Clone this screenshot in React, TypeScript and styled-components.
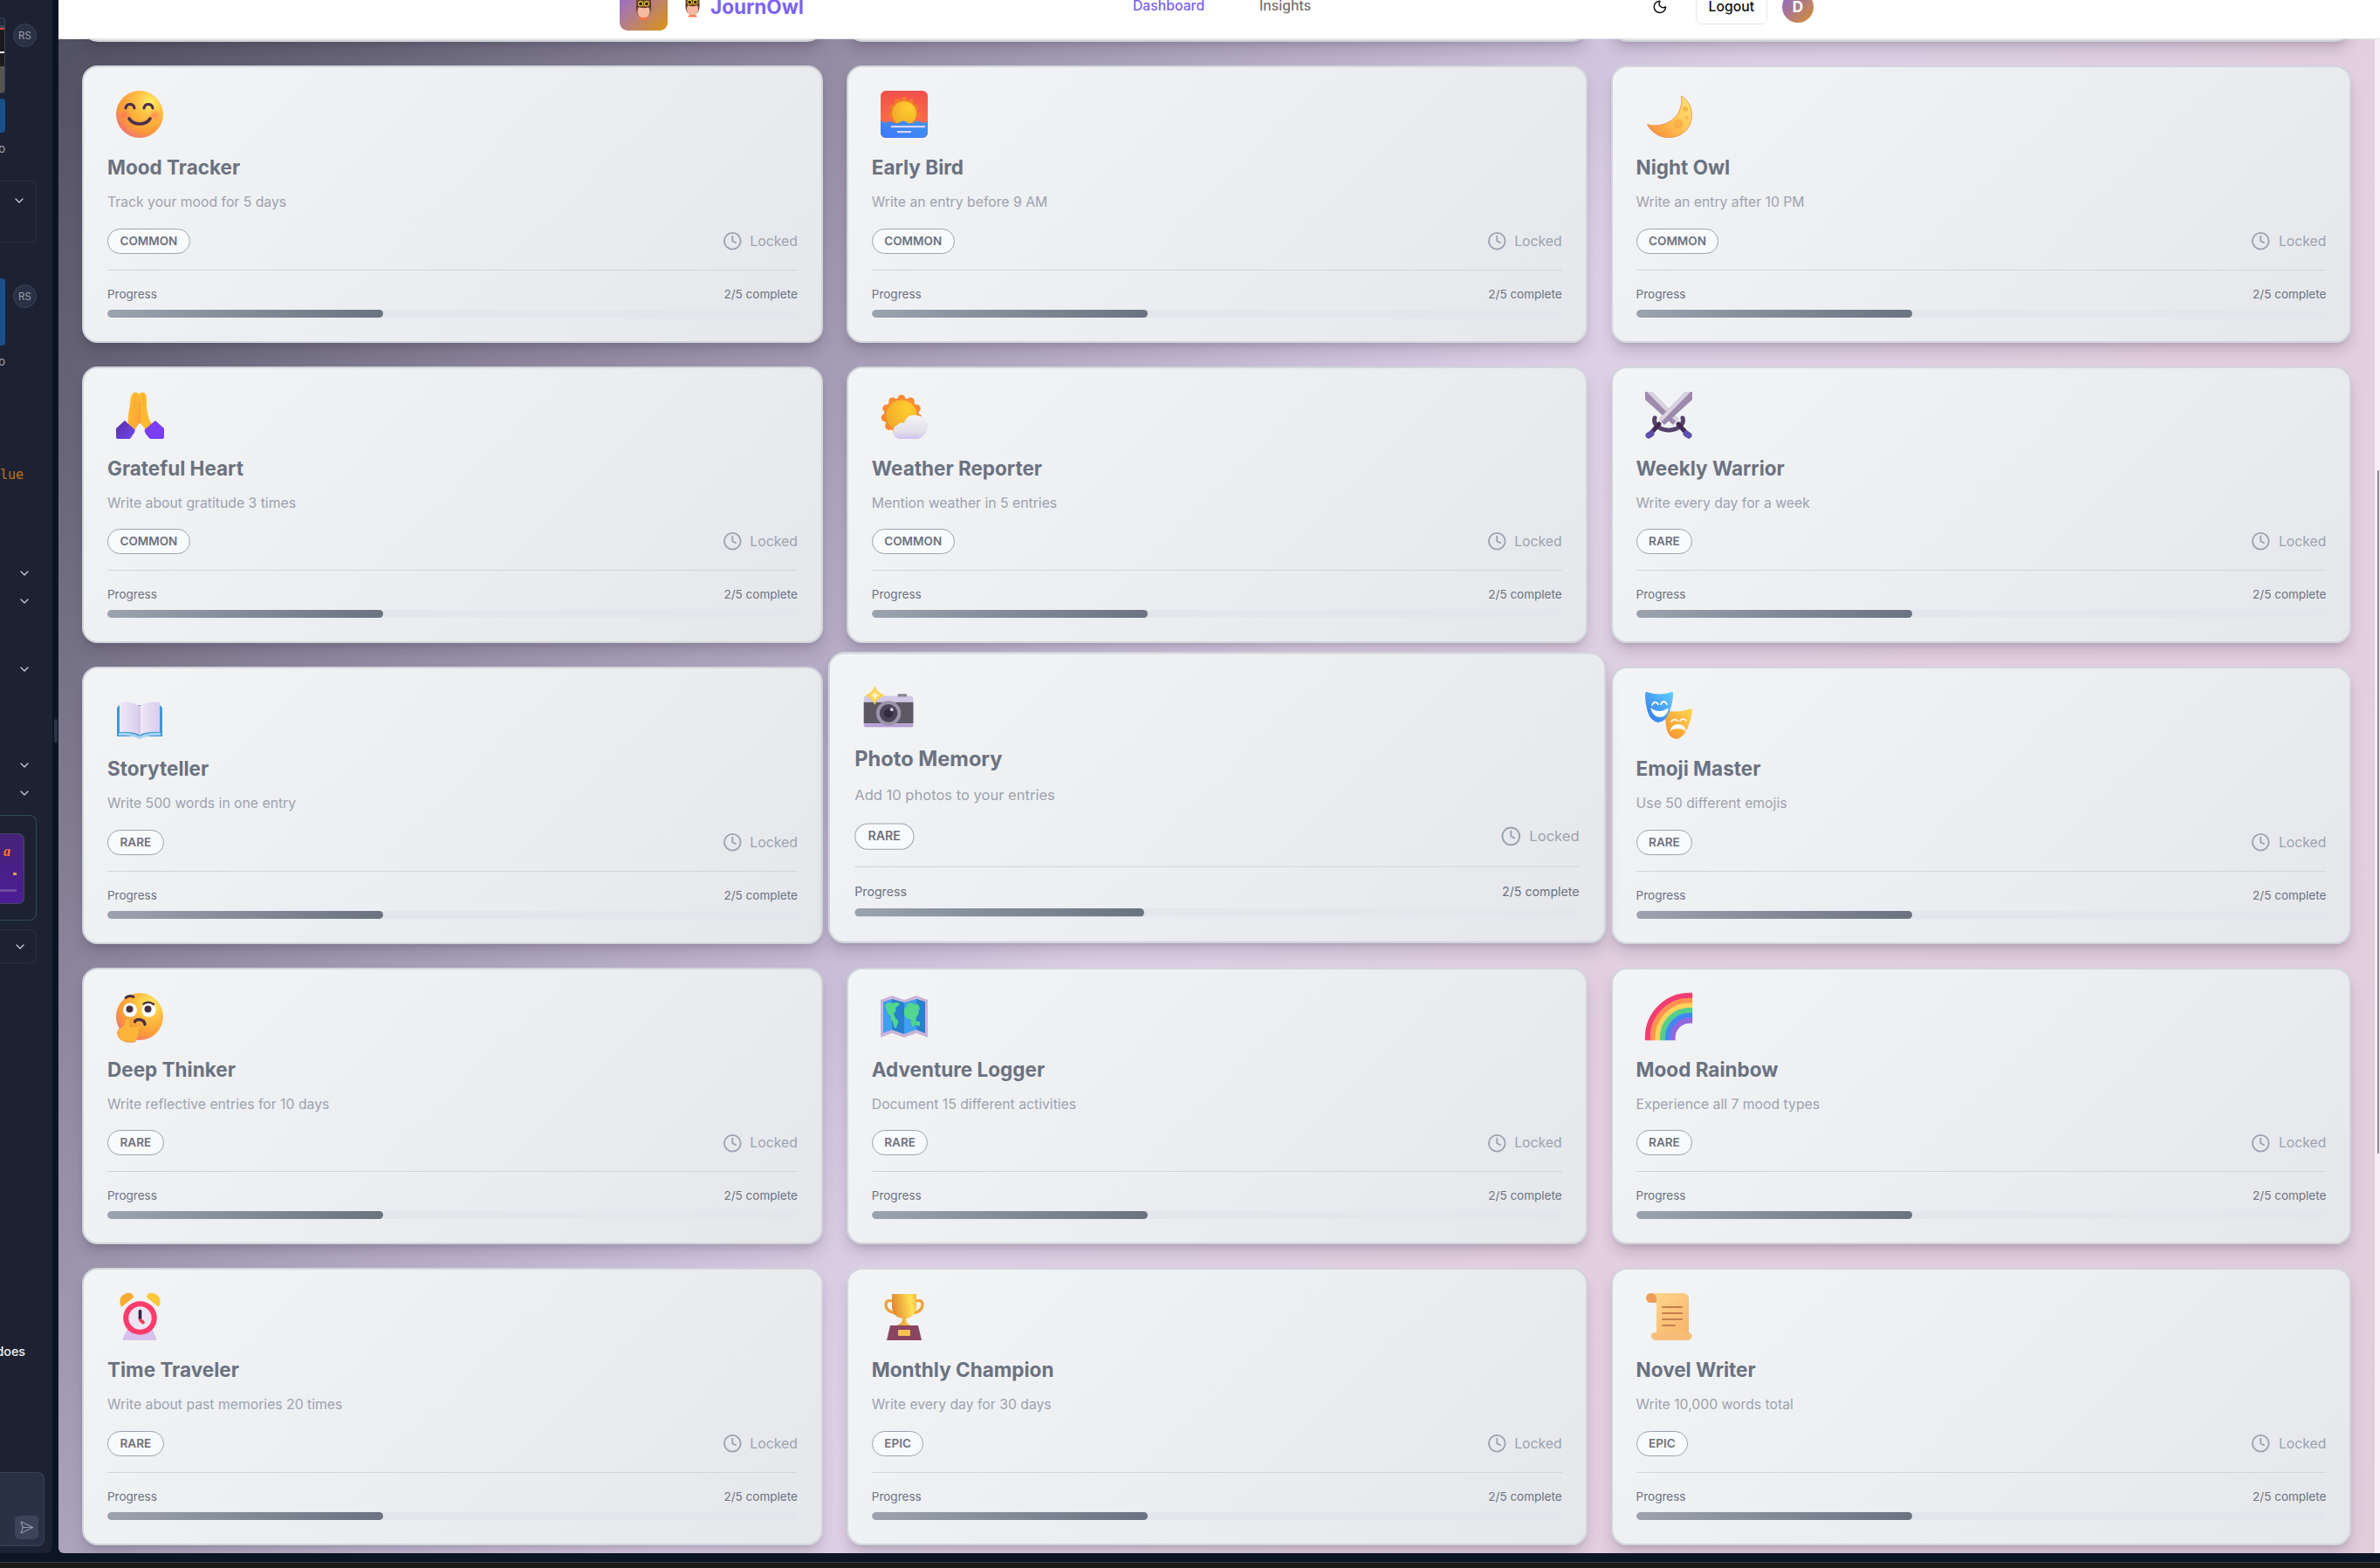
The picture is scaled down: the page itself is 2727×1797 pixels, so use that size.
import React from "react";
import styled, { createGlobalStyle } from "styled-components";
import { ChevronDown, Clock, Moon, SendHorizontal } from "lucide-react";

const GlobalStyle = createGlobalStyle`
  * { box-sizing: border-box; }
  body { margin: 0; background: #0c1524; font-family: Inter, "Liberation Sans", sans-serif; }
`;

const Screen = styled.div`
  width: 2727px;
  height: 1797px;
  display: grid;
  grid-template-rows: 1790px 7px;
  overflow: hidden;
`;

const Workspace = styled.div`
  display: flex;
  background: #0c1524;
`;

const Taskbar = styled.div`
  background: #1b1b1b;
  border-top: 1px solid #3a3d42;
`;

/* ---------- chat sidebar ---------- */

const Sidebar = styled.aside`
  width: 60px;
  height: 1780px;
  background: #1c2232;
  border-bottom-right-radius: 8px;
  overflow: hidden;
  flex: none;
`;

const Splitter = styled.div`
  width: 7px;
  flex: none;
  display: flex;
  justify-content: center;
  padding-top: 824px;
`;

const Grip = styled.div`
  width: 4px;
  height: 27px;
  border-radius: 2px;
  background: #2b3245;
`;

const Slot = styled.div<{ $h: number; $gap?: number; $right?: number }>`
  height: ${(p) => p.$h}px;
  margin-top: ${(p) => p.$gap ?? 0}px;
  padding-right: ${(p) => p.$right ?? 18}px;
  display: flex;
  justify-content: flex-end;
  align-items: center;
  overflow: hidden;
`;

const MessageRow = styled(Slot)`
  gap: 9px;
  justify-content: flex-start;
  align-items: flex-start;
`;

const Thumb = styled.div`
  width: 6px;
  height: 87px;
  border: 1px solid #3b4256;
  border-left: 0;
  border-radius: 0 4px 4px 0;
  flex: none;
  background: linear-gradient(#20283c 0 8px, #3d4250 8px 11px, #d94a4a 11px 13px, #1a1a1c 13px 38px, #f4f4f4 38px 40px, #1c1c1c 40px 55px, #55554f 55px);
`;

const BlueBubble = styled.div`
  width: 6px;
  height: 100%;
  border-radius: 0 4px 4px 0;
  background: #1a4f8a;
  flex: none;
`;

const Avatar = styled.div`
  width: 27px;
  height: 27px;
  margin-top: 7px;
  border-radius: 50%;
  border: 1px solid #3b4358;
  background: #2a3144;
  color: #9aa1ae;
  font-size: 11.5px;
  display: flex;
  align-items: center;
  justify-content: center;
  flex: none;
`;

const Stamp = styled.span`
  font-size: 13px;
  color: #a3a8b3;
`;

const CodeText = styled.span`
  font: 15px "DejaVu Sans Mono", monospace;
  color: #c0731b;
`;

const ChatText = styled.span`
  font-size: 14.3px;
  font-weight: 500;
  color: #f0f2f5;
`;

const Panel = styled.div<{ $h: number; $gap: number; $line?: string; $pad?: number; $right?: number }>`
  height: ${(p) => p.$h}px;
  width: 42px;
  margin-top: ${(p) => p.$gap}px;
  border: 1px solid ${(p) => p.$line ?? "#2b3142"};
  border-left: 0;
  border-radius: 0 8px 8px 0;
  padding: ${(p) => p.$pad ?? 0}px ${(p) => p.$right ?? 13}px 0 0;
  display: flex;
  justify-content: flex-end;
`;

const PurpleCard = styled.div`
  width: 28px;
  height: 81px;
  margin-top: 20px;
  border: 1px solid #4b4468;
  border-left: 0;
  border-radius: 0 7px 7px 0;
  background: linear-gradient(#452278, #4c1d95);
  display: flex;
  flex-direction: column;
  align-items: flex-end;
  padding: 8px 8px 0 0;
`;

const Script = styled.span`
  font: italic bold 16px/24px "Liberation Serif", serif;
  color: #f97a24;
  margin-right: 7px;
`;

const TinyLine = styled.div<{ $w: number; $c: string; $gap: number }>`
  width: ${(p) => p.$w}px;
  height: 3px;
  margin-top: ${(p) => p.$gap}px;
  background: ${(p) => p.$c};
`;

const Composer = styled.div`
  width: 51px;
  height: 85px;
  border: 1px solid #3a4258;
  border-left: 0;
  border-radius: 0 8px 8px 0;
  background: #2b3145;
  display: flex;
  justify-content: flex-end;
  align-items: flex-end;
  padding: 0 6px 7px 0;
`;

const SendButton = styled.div`
  width: 27px;
  height: 27px;
  border-radius: 5px;
  background: #3c435b;
  color: #9197a6;
  display: flex;
  align-items: center;
  justify-content: center;
`;

/* ---------- preview page ---------- */

const Preview = styled.main`
  width: 2660px;
  height: 1780px;
  overflow: hidden;
  border-radius: 0 0 0 6px;
  display: flex;
  flex-direction: column;
`;

const Header = styled.header`
  height: 45px;
  flex: none;
  background: #fff;
  border-bottom: 1px solid #e3e3e6;
  display: flex;
  align-items: flex-start;
  padding-left: 643px;
  position: relative;
  z-index: 2;
`;

const LogoBox = styled.div`
  width: 55px;
  height: 55px;
  margin-top: -20px;
  border-radius: 9px;
  background: linear-gradient(135deg, #8460e6, #a978a6 35%, #dc9410);
  display: flex;
  align-items: center;
  justify-content: center;
`;

const Brand = styled.div`
  display: flex;
  align-items: flex-start;
  gap: 11px;
  margin-left: 19px;
  width: 514px;
`;

const BrandOwl = styled.div`
  margin-top: -9px;
  height: 28px;
`;

const BrandName = styled.span`
  font-weight: 700;
  font-size: 22.5px;
  line-height: 32px;
  margin-top: -8px;
  color: #7c63f2;
`;

const NavLink = styled.span<{ $active?: boolean; $w: number }>`
  width: ${(p) => p.$w}px;
  font-size: 15.75px;
  font-weight: 500;
  line-height: 22px;
  margin-top: -4px;
  color: ${(p) => (p.$active ? "#7b61ee" : "#78716c")};
`;

const MoonIcon = styled(Moon)`
  margin: -1px 32px 0 0;
  color: #111;
`;

const LogoutButton = styled.div`
  width: 82px;
  height: 40px;
  margin-top: -12.5px;
  border: 1px solid #e5e5e8;
  border-radius: 7px;
  display: flex;
  align-items: center;
  justify-content: center;
  font-size: 15.75px;
  font-weight: 500;
  color: #111;
`;

const UserBadge = styled.div`
  width: 36px;
  height: 36px;
  margin: -10px 0 0 17px;
  border-radius: 50%;
  background: linear-gradient(135deg, #8765dd, #d8902a);
  display: flex;
  align-items: center;
  justify-content: center;
  font-size: 17px;
  font-weight: 700;
  color: #fff;
`;

const Body = styled.div`
  flex: 1;
  display: flex;
  min-height: 0;
`;

const Canvas = styled.section`
  width: 2654px;
  padding-left: 27px;
  overflow: hidden;
  background: linear-gradient(126deg, #525162, #6c697c 10.3%, #8a8399 19.6%, #a8a0b8 31%, #cbc0d9 43.5%, #dccfe5 50%, #e2cfe0 68%, #e0cddc);
`;

const Scrollbar = styled.div`
  width: 6px;
  background: #f6eef5;
  padding: 494px 1px 0 3px;
`;

const ScrollThumb = styled.div`
  height: 783px;
  border-radius: 2px;
  background: #8a8a8a;
`;

const Grid = styled.div`
  display: grid;
  grid-template-columns: repeat(3, 848.8px);
  gap: 27px;
`;

const cardShadow = "0 11px 17px -3px rgba(30, 20, 40, 0.17), 0 4px 7px -4px rgba(30, 20, 40, 0.17)";

const CardEdge = styled.div`
  height: 43px;
  margin-top: -40px;
  border: 2px solid #cdd1d7;
  border-radius: 18px;
  background: #e7e9ec;
  box-shadow: ${cardShadow};
`;

const Card = styled.article<{ $hover?: boolean }>`
  height: 317.6px;
  padding: 27px;
  border: 2.25px solid #d1d5db;
  border-radius: 18px;
  background: linear-gradient(135deg, #f3f4f6, #e5e7eb);
  box-shadow: ${cardShadow};
  ${(p) => p.$hover && "transform: translateY(-9px) scale(1.05); z-index: 1;"}
`;

const EmojiBox = styled.div`
  height: 72px;
  padding-left: 10px;
  svg { display: block; overflow: visible; }
`;

const Title = styled.h3`
  margin: 0 0 13.5px;
  font-size: 22.5px;
  line-height: 31.5px;
  font-weight: 700;
  color: #6b7280;
`;

const Description = styled.p`
  margin: 0 0 18px;
  font-size: 15.75px;
  line-height: 22.5px;
  color: #9ca3af;
`;

const MetaRow = styled.div`
  display: flex;
  justify-content: space-between;
  align-items: center;
  height: 29px;
`;

const Badge = styled.span`
  height: 29px;
  padding: 0 13.5px;
  border: 1px solid #9ca3af;
  border-radius: 99px;
  background: #f9fafb;
  font-size: 13.5px;
  font-weight: 600;
  line-height: 27px;
  color: #6b7280;
`;

const Locked = styled.span`
  display: flex;
  align-items: center;
  gap: 9px;
  font-size: 15.75px;
  color: #9ca3af;
`;

const ProgressBlock = styled.div`
  margin-top: 18px;
  padding-top: 18px;
  border-top: 1px solid #d1d5db;
`;

const ProgressLabels = styled.div`
  display: flex;
  justify-content: space-between;
  font-size: 13.5px;
  line-height: 18px;
  color: #6b7280;
  margin-bottom: 9px;
`;

const Track = styled.div`
  height: 9px;
  border-radius: 5px;
  background: #e3e7ec;
  overflow: hidden;
`;

const Fill = styled.div`
  width: 40%;
  height: 100%;
  border-radius: 5px;
  background: linear-gradient(90deg, #9ca3af, #6b7280);
`;

/* ---------- emoji drawings ---------- */

const Defs = () => (
  <svg width="0" height="0" style={{ display: "block" }}>
    <defs>
      <radialGradient id="face" cx="0.72" cy="0.25" r="0.85">
        <stop offset="0" stopColor="#fff06a" />
        <stop offset="0.35" stopColor="#ffc043" />
        <stop offset="0.75" stopColor="#fb9a38" />
        <stop offset="1" stopColor="#f0707a" />
      </radialGradient>
      <radialGradient id="blush">
        <stop offset="0" stopColor="#ff6a60" stopOpacity="0.65" />
        <stop offset="1" stopColor="#ff6a60" stopOpacity="0" />
      </radialGradient>
      <linearGradient id="sky" x1="0" y1="0" x2="0" y2="1">
        <stop offset="0" stopColor="#f2504a" />
        <stop offset="1" stopColor="#ff7a4a" />
      </linearGradient>
      <linearGradient id="water" x1="1" y1="0" x2="0" y2="1">
        <stop offset="0" stopColor="#3f96e8" />
        <stop offset="1" stopColor="#3f76ff" />
      </linearGradient>
      <radialGradient id="sun" cx="0.7" cy="0.3" r="0.8">
        <stop offset="0" stopColor="#ffcf30" />
        <stop offset="1" stopColor="#f0a928" />
      </radialGradient>
      <linearGradient id="moon" x1="1" y1="0" x2="0.1" y2="1">
        <stop offset="0" stopColor="#ffe57a" />
        <stop offset="0.5" stopColor="#ffc857" />
        <stop offset="1" stopColor="#f78a3c" />
      </linearGradient>
      <linearGradient id="hand" x1="0" y1="0" x2="1" y2="1">
        <stop offset="0" stopColor="#ffc531" />
        <stop offset="1" stopColor="#fb9d38" />
      </linearGradient>
      <linearGradient id="sleeve" x1="0" y1="0" x2="1" y2="1">
        <stop offset="0" stopColor="#5a2f9c" />
        <stop offset="1" stopColor="#6f49f5" />
      </linearGradient>
      <linearGradient id="cloud" x1="0" y1="0" x2="0" y2="1">
        <stop offset="0" stopColor="#f3f3f5" />
        <stop offset="0.7" stopColor="#e2dfe8" />
        <stop offset="1" stopColor="#cfc0f0" />
      </linearGradient>
      <linearGradient id="maskBlue" x1="1" y1="0" x2="0" y2="1">
        <stop offset="0" stopColor="#62d0ff" />
        <stop offset="1" stopColor="#3273ea" />
      </linearGradient>
      <linearGradient id="maskGold" x1="1" y1="0" x2="0" y2="1">
        <stop offset="0" stopColor="#ffd94f" />
        <stop offset="1" stopColor="#f78c2e" />
      </linearGradient>
      <linearGradient id="cup" x1="0" y1="0.2" x2="1" y2="0">
        <stop offset="0" stopColor="#e28a32" />
        <stop offset="0.75" stopColor="#ffe356" />
        <stop offset="1" stopColor="#f5b540" />
      </linearGradient>
      <linearGradient id="page" x1="0" y1="0" x2="1" y2="0">
        <stop offset="0" stopColor="#efe9f8" />
        <stop offset="1" stopColor="#d8cdec" />
      </linearGradient>
      <linearGradient id="paper" x1="0" y1="0" x2="1" y2="1">
        <stop offset="0" stopColor="#ffd98f" />
        <stop offset="1" stopColor="#f7b56a" />
      </linearGradient>
    </defs>
  </svg>
);

const scallops = (cx: number, cy: number, r: number, dot: number, n = 11) =>
  Array.from({ length: n }, (_, i) => {
    const a = (i / n) * Math.PI * 2 - Math.PI / 2;
    return <circle key={i} cx={cx + r * Math.cos(a)} cy={cy + r * Math.sin(a)} r={dot} />;
  });

const line = (stroke: string, w: number) => ({ fill: "none", stroke, strokeWidth: w, strokeLinecap: "round" as const });

const SwordShape = () => (
  <g>
    <path d="M0 0h8L38 31l-6 7L0 9z" fill="#9d8bae" />
    <path d="M2 0h6L38 31l-3 3z" fill="#d8d3df" />
    <path d="M43 30c2 7-4 13-15 14" {...line("#56426f", 5)} />
    <path d="M38 37l8 9" {...line("#432a55", 5)} />
    <path d="M47 48l3 2" {...line("#5d4fae", 7)} />
  </g>
);

const drawings: Record<string, React.ReactNode> = {
  smile: (
    <>
      <circle cx="27" cy="27" r="27" fill="url(#face)" />
      <circle cx="10" cy="28" r="7" fill="url(#blush)" />
      <circle cx="44" cy="28" r="7" fill="url(#blush)" />
      <path d="M11 20c1-6 9-6 10 0M32 20c1-6 9-6 10 0" {...line("#4b2f4b", 3.2)} />
      <path d="M15 32c5 8 19 8 24 0" {...line("#4b2f4b", 3.6)} />
    </>
  ),
  sunrise: (
    <>
      <rect width="54" height="54" rx="6" fill="url(#sky)" />
      <g fill="#f27a2b">{scallops(27, 25, 14.5, 3.6)}</g>
      <circle cx="27" cy="26" r="14" fill="url(#sun)" />
      <path d="M0 35q4 0 6 2 4-3 8-1 4 3 8 0 4-3 8 0 4 3 8 0 4-3 8 0 4 2 8-1v13a6 6 0 0 1-6 6H6a6 6 0 0 1-6-6z" fill="url(#water)" />
      <rect x="12" y="40" width="39" height="2.2" fill="#d9d6ff" />
      <rect x="19" y="46" width="16" height="2.2" fill="#d9d6ff" />
    </>
  ),
  crescent: (
    <>
      <path d="M41.500 6C55 14 57 33 48 44 37 58 12 57 2.500 38.700 20 44 45 32 41.500 6z" fill="url(#moon)" stroke="#e98a3c" strokeWidth="0.8" />
      <g fill="#f7a83f" opacity="0.7">
        <circle cx="38" cy="38" r="5.500" />
        <circle cx="22" cy="46" r="3.500" />
        <circle cx="46" cy="21" r="3" />
        <circle cx="48" cy="31" r="2" />
      </g>
    </>
  ),
  pray: (
    <>
      <path d="M14 37C13 28 15 22 16 13c0-4 1-9 3-11 2-2 5-2 7 1l1 32-7 11z" fill="url(#hand)" />
      <path d="M41 37c-5-8-6-16-6-24 0-6 0-10-3-12-3-1-6 0-6 3l1 31 9 11z" fill="#ffb92f" />
      <path d="M27 12v24" {...line("#f2913a", 1.3)} />
      <path d="M21 5v12M31 4v12" {...line("#f2a23a", 0.9)} />
      <path d="M10 33l11 10c2 2-1 5-5 11H2c-1 0-2-1-2-2V42z" fill="url(#sleeve)" />
      <path d="M45 33L33 43c-1 2 0 5 6 11h14c1 0 2-1 2-2V42z" fill="#7a3ff5" />
    </>
  ),
  sunCloud: (
    <>
      <g fill="#f98a31">{scallops(24, 27, 19, 4.5)}</g>
      <circle cx="24" cy="27" r="20" fill="#f98a31" />
      <circle cx="24" cy="27" r="17.500" fill="url(#sun)" />
      <path d="M22 54a8.500 8.500 0 0 1-3-16q4-4 8-2c2-9 9-10 14-9a13 13 0 0 1 7 24q-3 3-8 3z" fill="url(#cloud)" />
    </>
  ),
  swords: (
    <>
      <SwordShape />
      <g transform="translate(54 0) scale(-1 1)"><SwordShape /></g>
    </>
  ),
  book: (
    <>
      <path d="M1 18l3-3h46l3 3v33H33l-6 2-6-2H1z" fill="#3f97d6" />
      <path d="M4 12q12-2 23 4v33q-10-4-23-3z" fill="url(#page)" />
      <path d="M50 12q-12-2-23 4v33q10-4 23-3z" fill="url(#page)" />
      <path d="M3 47q14-1 24 4 10-5 24-4v3q-14-1-24 4-10-5-24-4z" fill="#a9d2f2" />
      <path d="M27 16v34" {...line("#cbbde2", 1.2)} />
    </>
  ),
  camera: (
    <g transform="translate(0 9)">
      <rect y="10" width="54" height="34" rx="3" fill="#d2c8e4" />
      <rect x="37" y="8" width="10" height="3" rx="1" fill="#8a8592" />
      <rect y="17" width="54" height="23" fill="#5c5864" />
      <rect y="40.500" width="54" height="3.500" rx="1.700" fill="#b79fd6" />
      <circle cx="27" cy="29" r="13.500" fill="#9c95aa" />
      <circle cx="27" cy="29" r="9.800" fill="#4c4457" />
      <circle cx="27" cy="29" r="5" fill="#352c40" />
      <circle cx="30.500" cy="25" r="1.800" fill="#d8d0e0" />
      <path d="M12 0q2 7 10 9.500-8 2.500-10 9.500-2-7-9.500-9.500Q10 7 12 0z" fill="#f8d44e" stroke="#f8d44e" strokeLinejoin="round" />
      <path d="M12 4q1 4.500 6 5.500-5 1-6 5.500-1-4.500-5-5.500 4-1 5-5.500z" fill="#fff0c0" />
    </g>
  ),
  masks: (
    <>
      <path d="M24 21q14 4 28-2 2 0 2 3-2 12-6 21-4 9-12 11-8-1-11-10-3-12-1-23z" fill="url(#maskGold)" />
      <path d="M28 46q2-9 10-9t9 9q-3-4-9.500-4T28 46z" fill="#fff" />
      <path d="M30 34q3-4 7-1M40 33q3-4 7 0" {...line("#fff", 1.7)} />
      <path d="M2 0q15 5 28 0 3 0 2 4-1 13-6 22-3 8-11 9-9-2-12-12Q0 12 0 3q0-3 2-3z" fill="url(#maskBlue)" />
      <path d="M6 18q10 8 21 0-2 11-10 11T6 18z" fill="#fff" />
      <path d="M8 15q3-6 7-1M18 14q3-6 7 0" {...line("#fff", 1.8)} />
    </>
  ),
  thinker: (
    <>
      <circle cx="27" cy="27" r="27" fill="url(#face)" />
      <circle cx="16" cy="19.500" r="8" fill="#fff" />
      <circle cx="37.500" cy="19.500" r="8" fill="#fff" />
      <circle cx="15.500" cy="18.500" r="4" fill="#45303f" />
      <circle cx="36.500" cy="18.500" r="4" fill="#45303f" />
      <path d="M11 5.500q4-3.500 9-1" {...line("#4b2f3f", 2.8)} />
      <path d="M31.500 12.500q6-4 11.500.5" {...line("#4b2f3f", 2.4)} />
      <path d="M21.500 33q1-3 6-2.500 5 1 5.500 5.500" {...line("#4b2f3f", 3.4)} />
      <path d="M10 32q0-3.500 3-3.500t3 3.500l.5 7 11-2q2 1 1 3.500l-2.500 1.500q2 2-.5 4.500 1 2.500-1 4 0 3-3 5.500-5 1-10 0-9-2-10-10Q2 41 7 39q3-2 3-7z" fill="#fdb43a" stroke="#e88f38" strokeWidth="0.8" />
    </>
  ),
  map: (
    <>
      <path d="M0 8l13-5 14 5 14-5 13 5v43l-13-5-14 5-14-5-13 5z" fill="#c9b4d6" />
      <path d="M3 10l10-3 14 4 14-4 10 3v36l-10-4-14 5-14-5-10 4z" fill="#3f9ff0" />
      <path d="M13 7l14 4v36l-14-5zM41 7l10 3v36l-10-4z" fill="#2680cf" />
      <path d="M5 14q5-5 9-2 6-3 8 1l-5 4q2 4-2 6l2 6q4 2 3 6l-3 6q-3-4-3-8-3-2-2-6-4-2-7-13zM27 18q3-2 4-6 5-2 8 1 6-2 6 7l-2-2q2 7-2 9-1 10-4 12-3-4-2-9-6 1-8-6zM40 32l5 1v5l-5-1z" fill="#51d68d" />
    </>
  ),
  rainbow: (
    <>
      {[
        ["#f23d72", "M3 51A48 48 0 0 1 51 3"],
        ["#ff934e", "M9 51A42 42 0 0 1 51 9"],
        ["#ffd35c", "M14.500 51A36.500 36.500 0 0 1 51 14.500"],
        ["#51cf8b", "M20 51A31 31 0 0 1 51 20"],
        ["#4286f5", "M26 51A25 25 0 0 1 51 26"],
        ["#9068dc", "M31.500 51A19.500 19.500 0 0 1 51 31.500"],
      ].map(([c, d]) => (
        <path key={c} d={d} fill="none" stroke={c} strokeWidth="6.3" strokeLinecap="square" />
      ))}
    </>
  ),
  alarm: (
    <>
      <path d="M9 54q-2 0-1-3l5-10h28l5 10q1 3-1 3z" fill="#d5c3ee" />
      <path d="M6 16Q1 4 12 0q8-1 8 5z" fill="#f6ac31" />
      <path d="M49 16Q54 4 43 0q-8-1-8 5z" fill="#fbc83b" />
      <circle cx="27.500" cy="28.500" r="19.300" fill="#fb3c6b" />
      <circle cx="27.500" cy="28.500" r="13.200" fill="#eee5f4" />
      <path d="M27.500 20.500v9" {...line("#35233e", 3.6)} />
      <path d="M28 31l3 2.500" {...line("#f03c5c", 3.8)} />
    </>
  ),
  trophy: (
    <>
      <path d="M14 9q-8-2-8 4 0 8 11 10M40 9q8-2 8 4 0 8-11 10" {...line("#efa238", 3.2)} />
      <path d="M13 1h28v14q0 12-12 14l1 5 5 3H19l5-3 1-5q-12-2-12-14z" fill="url(#cup)" />
      <path d="M11 37h32l4 17H7z" fill="#8a4560" />
      <rect x="20" y="42" width="14" height="7" rx="1" fill="#f6c054" />
    </>
  ),
  scroll: (
    <>
      <path d="M7 0h37q6 1 6 6v41H13V11H5Q1 9 1 5q1-5 6-5z" fill="url(#paper)" />
      <path d="M7 0q6 1 6 6v5H5Q1 9 1 5q1-5 6-5z" fill="#ee9d5a" />
      <path d="M12 45h39q4 3 2 6-1 3-5 3H12q-5-1-5-5t5-4z" fill="#f8bd78" />
      <path d="M20 16h22M20 23h22M20 30h22M20 37h14" {...line("#c87d4c", 2)} />
    </>
  ),
};

const Emoji = ({ name }: { name: string }) => (
  <svg width="54" height="54" viewBox="0 0 54 54">{drawings[name]}</svg>
);

const Owl = ({ w, h }: { w: number; h: number }) => (
  <svg width={w} height={h} viewBox="0 0 20 34">
    <path d="M1 3l4 2h10l4-2 .5 16q0 10-9.500 13Q.5 29 .5 19z" fill="#6b3f30" />
    <ellipse cx="10" cy="23" rx="7.800" ry="8.500" fill="#f6b9a2" />
    <path d="M1.500 11h17v6q-8 4-17 0z" fill="#5d352a" />
    <circle cx="6.200" cy="13.500" r="2.800" fill="#2b1a16" stroke="#d9c02c" strokeWidth="1.4" />
    <circle cx="13.800" cy="13.500" r="2.800" fill="#2b1a16" stroke="#d9c02c" strokeWidth="1.4" />
    <path d="M8.800 15.500h2.400L10 18.500z" fill="#f0703c" />
    <path d="M5 31h10l1 2.500H4z" fill="#ff7043" />
  </svg>
);

const achievements = [
  ["smile", "Mood Tracker", "Track your mood for 5 days", "COMMON"],
  ["sunrise", "Early Bird", "Write an entry before 9 AM", "COMMON"],
  ["crescent", "Night Owl", "Write an entry after 10 PM", "COMMON"],
  ["pray", "Grateful Heart", "Write about gratitude 3 times", "COMMON"],
  ["sunCloud", "Weather Reporter", "Mention weather in 5 entries", "COMMON"],
  ["swords", "Weekly Warrior", "Write every day for a week", "RARE"],
  ["book", "Storyteller", "Write 500 words in one entry", "RARE"],
  ["camera", "Photo Memory", "Add 10 photos to your entries", "RARE"],
  ["masks", "Emoji Master", "Use 50 different emojis", "RARE"],
  ["thinker", "Deep Thinker", "Write reflective entries for 10 days", "RARE"],
  ["map", "Adventure Logger", "Document 15 different activities", "RARE"],
  ["rainbow", "Mood Rainbow", "Experience all 7 mood types", "RARE"],
  ["alarm", "Time Traveler", "Write about past memories 20 times", "RARE"],
  ["trophy", "Monthly Champion", "Write every day for 30 days", "EPIC"],
  ["scroll", "Novel Writer", "Write 10,000 words total", "EPIC"],
];

const AchievementCard = ({ item }: { item: string[] }) => {
  const [icon, title, text, rarity] = item;
  return (
    <Card $hover={icon === "camera"}>
      <EmojiBox><Emoji name={icon} /></EmojiBox>
      <Title>{title}</Title>
      <Description>{text}</Description>
      <MetaRow>
        <Badge>{rarity}</Badge>
        <Locked><Clock size={22.5} strokeWidth={2} />Locked</Locked>
      </MetaRow>
      <ProgressBlock>
        <ProgressLabels><span>Progress</span><span>2/5 complete</span></ProgressLabels>
        <Track><Fill /></Track>
      </ProgressBlock>
    </Card>
  );
};

const Caret = () => <ChevronDown size={16} strokeWidth={2} color="#c3c7d0" />;

const ChatSidebar = () => (
  <Sidebar>
    <MessageRow $h={87} $gap={20}>
      <Thumb />
      <Avatar>RS</Avatar>
    </MessageRow>
    <MessageRow $h={39} $gap={6}><BlueBubble /></MessageRow>
    <Slot $h={16} $gap={10} $right={54}><Stamp>o</Stamp></Slot>
    <Panel $h={71} $gap={29} $pad={14} $right={11}><Caret /></Panel>
    <MessageRow $h={77} $gap={41}>
      <BlueBubble />
      <Avatar>RS</Avatar>
    </MessageRow>
    <Slot $h={16} $gap={10} $right={54}><Stamp>o</Stamp></Slot>
    <Slot $h={24} $gap={110} $right={33}><CodeText>alue</CodeText></Slot>
    <Slot $h={16} $gap={93} $right={24}><Caret /></Slot>
    <Slot $h={16} $gap={16} $right={24}><Caret /></Slot>
    <Slot $h={16} $gap={62} $right={24}><Caret /></Slot>
    <Slot $h={16} $gap={94} $right={24}><Caret /></Slot>
    <Slot $h={16} $gap={16} $right={24}><Caret /></Slot>
    <Panel $h={121} $gap={17} $line="#31485a">
      <PurpleCard>
        <Script>a</Script>
        <TinyLine $w={4} $c="#e0a03c" $gap={12} />
        <TinyLine $w={19} $c="#6d4fa5" $gap={16} />
      </PurpleCard>
    </Panel>
    <Panel $h={39} $gap={10} $pad={11} $right={10}><Caret /></Panel>
    <Slot $h={24} $gap={432} $right={31}><ChatText>does</ChatText></Slot>
    <Slot $h={85} $gap={127} $right={9}>
      <Composer><SendButton><SendHorizontal size={17} strokeWidth={1.6} /></SendButton></Composer>
    </Slot>
  </Sidebar>
);

export default function App() {
  return (
    <>
      <GlobalStyle />
      <Defs />
      <Screen>
        <Workspace>
          <ChatSidebar />
          <Splitter><Grip /></Splitter>
          <Preview>
            <Header>
              <LogoBox><Owl w={21} h={31} /></LogoBox>
              <Brand>
                <BrandOwl><Owl w={19} h={29} /></BrandOwl>
                <BrandName>JournOwl</BrandName>
              </Brand>
              <NavLink $active $w={145}>Dashboard</NavLink>
              <NavLink $w={450}>Insights</NavLink>
              <MoonIcon size={17.8} strokeWidth={2} />
              <LogoutButton>Logout</LogoutButton>
              <UserBadge>D</UserBadge>
            </Header>
            <Body>
              <Canvas>
                <Grid>
                  <CardEdge />
                  <CardEdge />
                  <CardEdge />
                  {achievements.map((a) => <AchievementCard key={a[1]} item={a} />)}
                </Grid>
              </Canvas>
              <Scrollbar><ScrollThumb /></Scrollbar>
            </Body>
          </Preview>
        </Workspace>
        <Taskbar />
      </Screen>
    </>
  );
}
